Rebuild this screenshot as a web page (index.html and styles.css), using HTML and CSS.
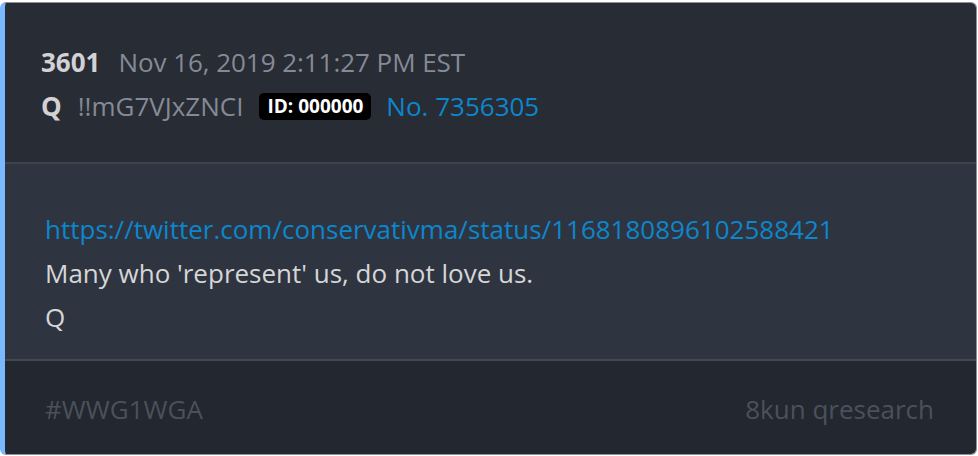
FILE: index.html
```html
<!DOCTYPE html>
<html lang="en">
<head>
    <meta charset="UTF-8">
    <meta name="viewport" content="width=device-width, initial-scale=1.0">
    <title>Q drop 3601</title>
    <link rel="stylesheet" href="styles.css">
</head>
<body>
    <div class="post">
        <div class="post-header">
            <div class="meta-line">
                <span class="post-num">3601</span>
                <span class="post-date">Nov 16, 2019 2:11:27 PM EST</span>
            </div>
            <div class="meta-line">
                <span class="author">Q</span>
                <span class="trip">!!mG7VJxZNCI</span>
                <span class="id-badge">ID: 000000</span>
                <a class="post-link" href="#">No. 7356305</a>
            </div>
        </div>

        <div class="post-body">
            <a class="body-link" href="#">https://twitter.com/conservativma/status/1168180896102588421</a>
            <p>Many who 'represent' us, do not love us.</p>
            <p>Q</p>
        </div>

        <div class="post-footer">
            <span>#WWG1WGA</span>
            <span>8kun qresearch</span>
        </div>
    </div>
</body>
</html>
```

FILE: styles.css
```css
body {
    font-family: 'Open Sans', 'Noto Sans', sans-serif;
    background-color: #ffffff;
    margin: 0;
    padding: 2px 0 0 0;
}
.post {
    width: 977px;
    height: 453px;
    box-sizing: border-box;
    border: 1px solid #8c919b;
    border-left: 5px solid #7ab9ff;
    border-radius: 6px;
    overflow: hidden;
    display: flex;
    flex-direction: column;
    font-size: 26px;
    line-height: 44px;
}
.post-header {
    background-color: #282c35;
    padding: 37px 36px 0 36px;
    height: 161px;
    box-sizing: border-box;
    border-bottom: 2px solid #3d424c;
}
.meta-line {
    display: flex;
    align-items: center;
}
.post-num {
    font-weight: bold;
    color: #d2d2d4;
    margin-right: 18px;
}
.post-date {
    color: #858a96;
    letter-spacing: -0.05px;
}
.author {
    font-weight: bold;
    color: #d2d2d4;
    margin-right: 16px;
}
.trip {
    color: #858a96;
    margin-right: 16px;
}
.id-badge {
    background-color: #000000;
    color: #ffffff;
    font-weight: bold;
    font-size: 19px;
    line-height: 27px;
    padding: 0 8px;
    border-radius: 5px;
    margin-right: 15px;
}
.post-link {
    color: #0d86cc;
    text-decoration: none;
}
.post-body {
    background-color: #2f3540;
    padding: 43px 40px 22px 40px;
    height: 197px;
    box-sizing: border-box;
    border-bottom: 2px solid #434853;
}
.body-link {
    color: #0d86cc;
    text-decoration: none;
}
.post-body p {
    margin: 0;
    color: #d6d6d8;
}
.post-footer {
    background-color: #23272f;
    flex: 1;
    display: flex;
    justify-content: space-between;
    align-items: center;
    padding: 2px 42px 0 40px;
    color: #4b515c;
}
```
